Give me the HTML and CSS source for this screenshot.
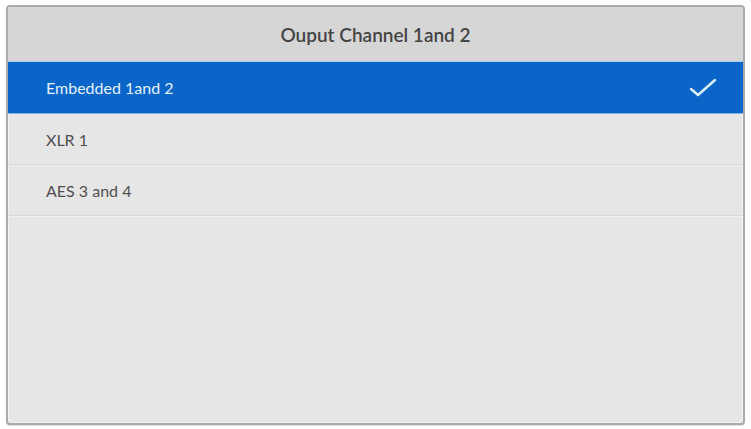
FILE: index.html
```html
<!DOCTYPE html>
<html lang="en">

<head>
    <meta charset="UTF-8" />
    <title>Ouput Channel 1 and 2</title>
    <link rel="stylesheet" href="styles.css">
</head>

<body>

    <div class="panel">
        <div class="panel-title">Ouput Channel 1and 2</div>

        <ul class="options">
            <li class="option selected">
                <span>Embedded 1and 2</span>
                <svg class="check" width="28" height="20" viewBox="0 0 28 20">
                    <path d="M2 11 L9 17 L26 2" fill="none" stroke="#dff0ff" stroke-width="2.4"
                        stroke-linecap="round" stroke-linejoin="round" />
                </svg>
            </li>
            <li class="option">XLR 1</li>
            <li class="option">AES 3 and 4</li>
        </ul>
    </div>

</body>

</html>
```

FILE: styles.css
```css
body {
    margin: 0;
    background: #fff;
    font-family: Lato, "Open Sans", sans-serif;
    padding: 5px 6px 4px 6px;
}

.panel {
    height: 416px;
    background: #e6e6e6;
    border: 2px solid #ababab;
    border-radius: 4px;
    box-shadow: inset 0 0 0 1px #f2f2f2, 0 1px 1px rgba(0, 0, 0, 0.15);
    overflow: hidden;
    display: flex;
    flex-direction: column;
}

.panel-title {
    height: 54px;
    background: #d6d6d6;
    color: #454545;
    font-size: 19px;
    font-weight: 600;
    display: flex;
    align-items: center;
    justify-content: center;
    border-bottom: 1px solid #a9c9ee;
}

.options {
    list-style: none;
    margin: 0;
    padding: 0;
}

.option {
    height: 50px;
    padding: 0 26px 0 38px;
    display: flex;
    align-items: center;
    justify-content: space-between;
    font-size: 16px;
    color: #505050;
    border-bottom: 1px solid #d9d9d9;
    box-shadow: 0 1px 0 #f0f0f0;
}

.option.selected {
    height: 51px;
    background: #0a65c9;
    color: #e4f1ff;
    border-bottom: 1px solid #7fb0e6;
    box-shadow: none;
}
```
